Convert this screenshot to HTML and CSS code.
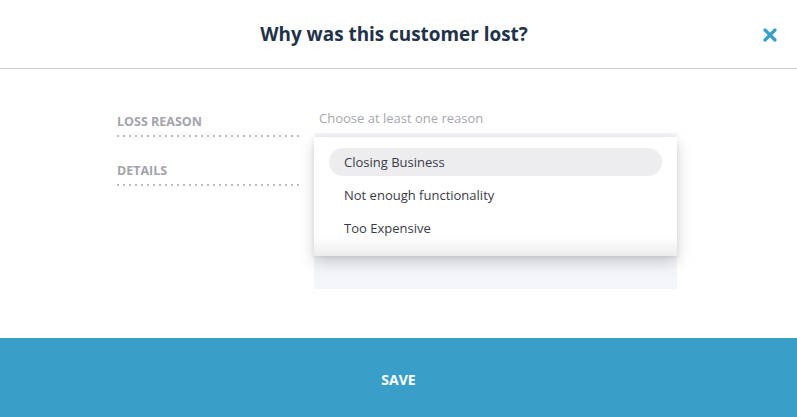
FILE: index.html
```html
<!DOCTYPE html>
<html>
<head>
<meta charset="utf-8">
<link rel="stylesheet" href="styles.css">
</head>
<body>
<div class="modal">
  <header class="header">
    <h1 class="title">Why was this customer lost?</h1>
    <button class="close" aria-label="Close">
      <svg width="14" height="14" viewBox="0 0 14 14"><path d="M2 2 L12 12 M12 2 L2 12" stroke="#3a9fc8" stroke-width="3.2" stroke-linecap="round"/></svg>
    </button>
  </header>
  <main class="body">
    <div class="form">
      <div class="label">LOSS REASON</div>
      <div class="field">
        <div class="select">Choose at least one reason</div>
        <ul class="menu">
          <li class="option active">Closing Business</li>
          <li class="option">Not enough functionality</li>
          <li class="option">Too Expensive</li>
        </ul>
      </div>
      <div class="label">DETAILS</div>
      <div class="field">
        <div class="textarea"></div>
      </div>
    </div>
  </main>
  <footer class="footer">SAVE</footer>
</div>
</body>
</html>
```
FILE: styles.css
```css
* { box-sizing: border-box; }
html, body { margin: 0; padding: 0; background: #fff; }
body { font-family: "Open Sans", "DejaVu Sans", sans-serif; }
.modal { width: 797px; height: 417px; display: flex; flex-direction: column; }
.header {
  height: 69px; flex: none;
  border-bottom: 1px solid #cfcfd2;
  display: flex; align-items: center; justify-content: center;
  padding-right: 9px;
  position: relative;
}
.title { margin: 0; font-size: 18.9px; font-weight: 700; color: #1f3249; padding-bottom: 1px; }
.close {
  position: absolute; right: 20px; top: 28px;
  background: none; border: 0; padding: 0; width: 14px; height: 14px; display: block;
}
.close svg { display: block; }
.body { flex: 1; padding: 39px 0 0 117px; }
.form { display: grid; grid-template-columns: 183px 363px; column-gap: 14px; row-gap: 19px; }
.label {
  font-size: 12.5px; font-weight: 700; color: #a3a3ab;
  height: 29px; padding-top: 5px;
  background-image: repeating-linear-gradient(to right, #b9b9be 0 2px, transparent 2px 6px);
  background-size: 100% 2px; background-repeat: no-repeat; background-position: 0 27px;
}
.field { position: relative; }
.select {
  height: 30px; border-bottom: 1px solid #cacace;
  font-size: 13px; color: #a7a7ae; padding: 1px 0 0 5px;
}
.textarea { height: 156px; background: #f4f5f9; margin-top: -24px; }
.menu {
  position: absolute; left: 0; right: 0; top: 29px; z-index: 2;
  margin: 0; padding: 11px 15px 0; list-style: none;
  height: 119px;
  background: linear-gradient(to bottom, #fff 0, #fff 100px, #ececec 119px);
  box-shadow: 0 6px 14px rgba(0,0,0,0.18), 0 1px 4px rgba(0,0,0,0.08);
}
.option { height: 28px; line-height: 28px; padding-left: 15px; font-size: 13px; color: #3b3b48; margin-bottom: 5px; border-radius: 14px; }
.option.active { background: #ededf0; }
.footer {
  height: 79px; flex: none; background: #3a9fc8; color: #fff;
  font-size: 14px; font-weight: 700;
  display: flex; align-items: center; justify-content: center; padding-top: 3px;
}
```
